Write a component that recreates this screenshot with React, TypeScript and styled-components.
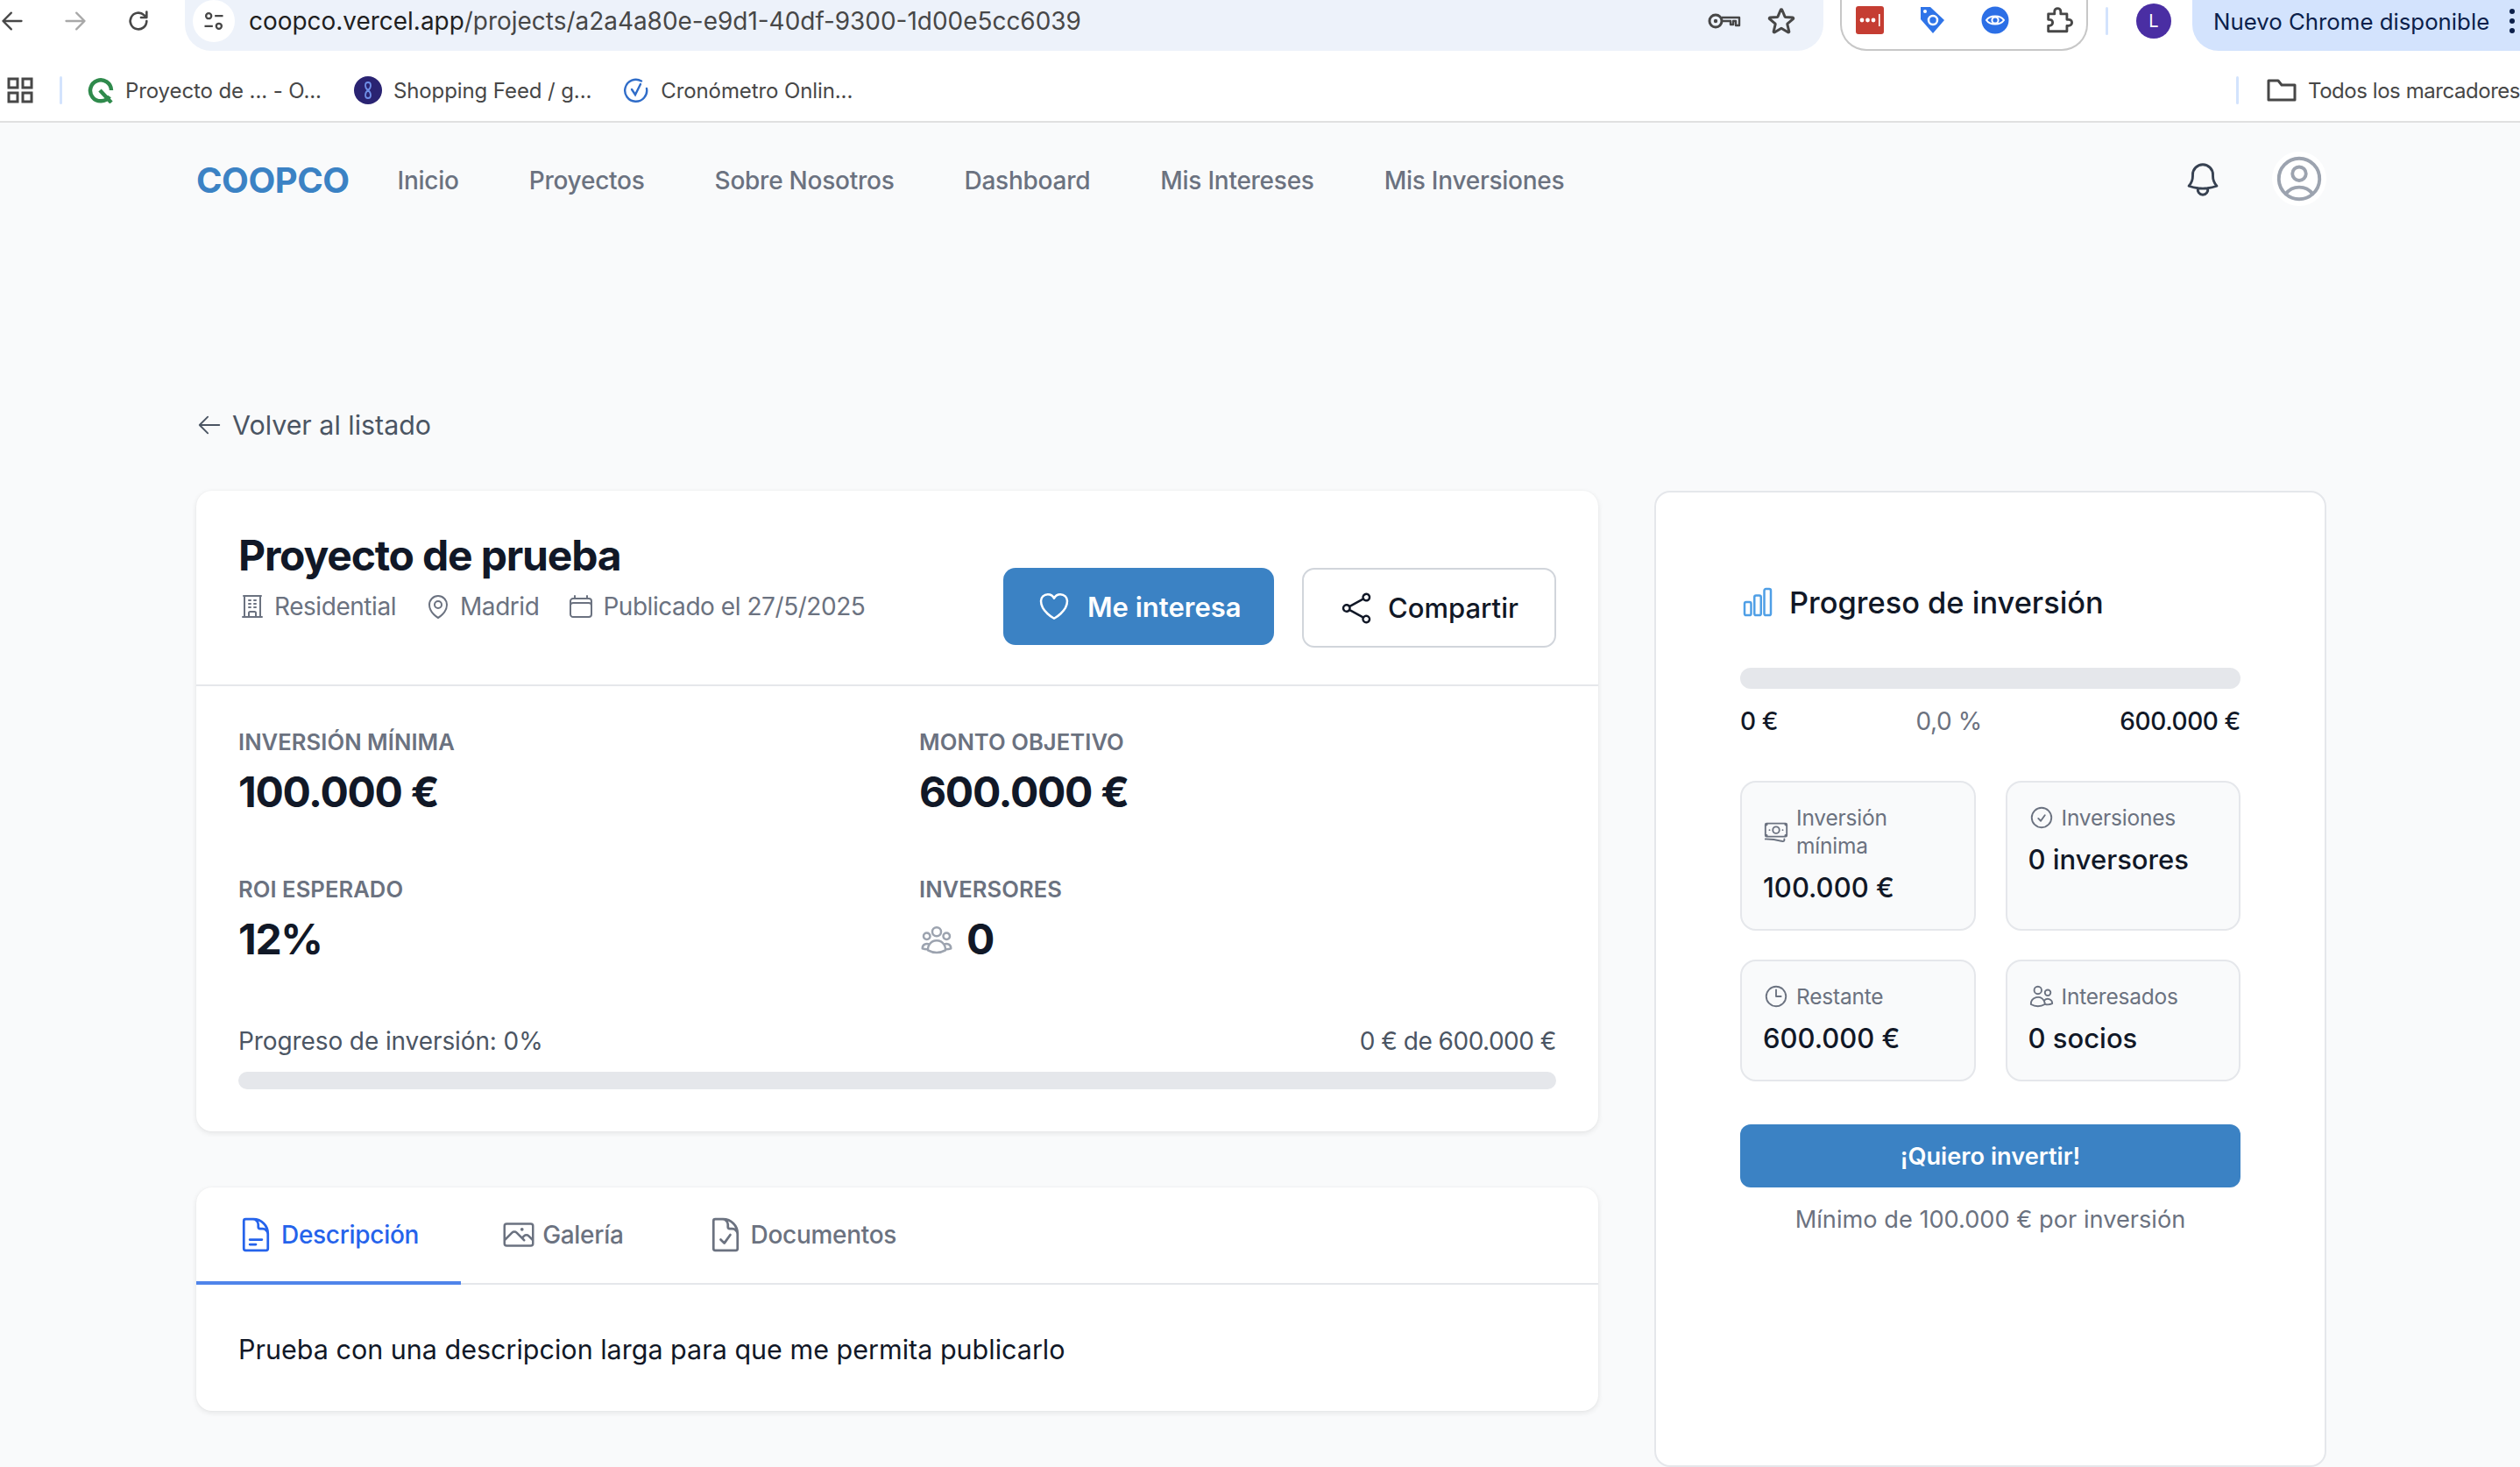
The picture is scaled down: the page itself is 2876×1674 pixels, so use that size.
import React from 'react';
import styled, { createGlobalStyle } from 'styled-components';
import {
  HiOutlineArrowLeft,
  HiOutlineBanknotes,
  HiOutlineBell,
  HiOutlineBuildingOffice,
  HiOutlineCalendar,
  HiOutlineChartBar,
  HiOutlineCheckCircle,
  HiOutlineClock,
  HiOutlineDocumentCheck,
  HiOutlineDocumentText,
  HiOutlineHeart,
  HiOutlineMapPin,
  HiOutlinePhoto,
  HiOutlineShare,
  HiOutlineStar,
  HiOutlineUserCircle,
  HiOutlineUserGroup,
  HiOutlineUsers,
} from 'react-icons/hi2';

const GlobalStyle = createGlobalStyle`
  html, body {
    margin: 0;
    padding: 0;
    width: 2876px;
    height: 1674px;
    overflow: hidden;
    background: #f9fafb;
    font-family: Inter, "Liberation Sans", sans-serif;
  }
  * { box-sizing: border-box; }
`;

const Toolbar = styled.div`
  display: flex;
  align-items: center;
  height: 58px;
  padding-bottom: 10px;
  background: #fff;
  overflow: hidden;
`;

const ToolIcon = styled.svg<{ $left: number; $muted?: boolean }>`
  flex: none;
  margin-left: ${(p) => p.$left}px;
  color: ${(p) => (p.$muted ? '#a8a8a8' : '#474747')};
`;

const Omnibox = styled.div`
  flex: none;
  align-self: flex-start;
  display: flex;
  align-items: center;
  width: 1870px;
  height: 58px;
  margin-left: 39px;
  padding: 0 30px 10px 9px;
  background: #edf2fa;
  border-radius: 0 0 30px 30px;
`;

const SiteInfo = styled.div`
  flex: none;
  display: flex;
  align-items: center;
  justify-content: center;
  width: 48px;
  height: 48px;
  background: #fff;
  border-radius: 50%;
`;

const Url = styled.div`
  flex: 1;
  margin-left: 16px;
  font-size: 27.95px;
  color: #1f1f1f;
  white-space: nowrap;
  span {
    color: #474747;
  }
`;

const StarIcon = styled(HiOutlineStar)`
  flex: none;
  margin-left: 28px;
  color: #474747;
`;

const ExtensionPill = styled.div`
  flex: none;
  align-self: flex-start;
  display: flex;
  align-items: center;
  justify-content: space-between;
  width: 283px;
  height: 58px;
  margin-left: 19px;
  padding: 0 15px 10px 16px;
  background: #fff;
  border: 2px solid #c7c7c7;
  border-top: 0;
  border-radius: 0 0 30px 30px;
`;

const BarSeparator = styled.div<{ $left?: number }>`
  flex: none;
  width: 3px;
  height: 32px;
  margin-left: ${(p) => p.$left ?? 0}px;
  background: #d3e3fd;
  border-radius: 2px;
`;

const ProfileAvatar = styled.div`
  flex: none;
  display: flex;
  align-items: center;
  justify-content: center;
  width: 40px;
  height: 40px;
  margin-left: 32px;
  font-size: 20px;
  color: #fff;
  background: #4a2ea3;
  border-radius: 50%;
`;

const UpdatePill = styled.div`
  flex: none;
  align-self: flex-start;
  display: flex;
  align-items: center;
  width: 374px;
  height: 58px;
  margin-left: 24px;
  padding: 0 0 10px 24px;
  font-size: 25.8px;
  color: #0b1f4b;
  white-space: nowrap;
  background: #d3e3fd;
  border-radius: 0 0 0 30px;
`;

const UpdateDots = styled.svg`
  flex: none;
  margin-left: 22px;
`;

const Bookmarks = styled.div`
  display: flex;
  align-items: center;
  height: 82px;
  padding-top: 10px;
  background: #fff;
  border-bottom: 2px solid #e0e0e0;
  overflow: hidden;
`;

const Bookmark = styled.div<{ $left: number }>`
  flex: none;
  display: flex;
  align-items: center;
  gap: 13px;
  margin-left: ${(p) => p.$left}px;
  font-size: 24px;
  letter-spacing: -0.1px;
  color: #474747;
  white-space: nowrap;
`;

const AllBookmarksLabel = styled.span`
  width: 242px;
  letter-spacing: -0.45px;
`;

const Spacer = styled.div`
  flex: 1;
`;

const TopNav = styled.nav`
  display: flex;
  align-items: center;
  height: 130px;
  padding: 0 221px 0 224px;
`;

const Logo = styled.div`
  font-size: 40px;
  font-weight: 700;
  color: #3b82c4;
  letter-spacing: -0.5px;
  margin-right: 55px;
`;

const NavLinks = styled.div`
  display: flex;
  gap: 80px;
  padding-top: 2px;
`;

const NavLink = styled.a`
  font-size: 28px;
  font-weight: 500;
  letter-spacing: -0.25px;
  color: #6b7280;
`;

const NavActions = styled.div`
  display: flex;
  align-items: center;
  gap: 56px;
  margin-left: auto;
`;

const UserHalo = styled.div`
  display: flex;
  align-items: center;
  justify-content: center;
  width: 62px;
  height: 62px;
  margin-top: -2px;
  background: #fff;
  border-radius: 50%;
  color: #9ca3af;
`;

const Main = styled.main`
  padding: 0 221px 0 224px;
`;

const BackLink = styled.a`
  display: flex;
  align-items: center;
  gap: 11px;
  height: 40px;
  margin-top: 195px;
  font-size: 30.4px;
  color: #4b5563;
`;

const Columns = styled.div`
  display: grid;
  grid-template-columns: 1600px 767px;
  gap: 64px;
  margin-top: 55px;
  align-items: start;
`;

const LeftColumn = styled.div`
  display: flex;
  flex-direction: column;
  gap: 64px;
`;

const Card = styled.section`
  background: #fff;
  border-radius: 18px;
  box-shadow: 0 2px 6px rgba(0, 0, 0, 0.09), 0 0 2px rgba(0, 0, 0, 0.04);
  overflow: hidden;
`;

const ProjectHeader = styled.header`
  display: flex;
  justify-content: space-between;
  align-items: flex-end;
  min-height: 223px;
  padding: 44px 48px 42px;
  border-bottom: 2px solid #e5e7eb;
`;

const TitleBlock = styled.div`
  align-self: flex-start;
`;

const Title = styled.h1`
  margin: 0;
  font-size: 48px;
  line-height: 60px;
  font-weight: 700;
  letter-spacing: -1.2px;
  color: #111827;
`;

const MetaRow = styled.div`
  display: flex;
  gap: 32px;
  margin-top: 8px;
  line-height: 40px;
`;

const MetaItem = styled.span`
  display: flex;
  align-items: center;
  gap: 9px;
  font-size: 28px;
  letter-spacing: -0.45px;
  color: #6b7280;
`;

const Actions = styled.div`
  display: flex;
  gap: 32px;
`;

const PrimaryButton = styled.button`
  display: flex;
  align-items: center;
  gap: 18px;
  width: 309px;
  height: 88px;
  margin-bottom: 3px;
  padding: 0 0 0 38px;
  font: 600 31px Inter, sans-serif;
  color: #fff;
  background: #3b82c4;
  border: 0;
  border-radius: 14px;
`;

const OutlineButton = styled.button`
  display: flex;
  align-items: center;
  gap: 16px;
  width: 290px;
  height: 91px;
  padding: 0 0 0 40px;
  font: 500 31px Inter, sans-serif;
  color: #111827;
  background: #fff;
  border: 2px solid #d1d5db;
  border-radius: 14px;
`;

const Stats = styled.div`
  padding: 48px 48px 48px;
`;

const StatGrid = styled.div`
  display: grid;
  grid-template-columns: 1fr 1fr;
  column-gap: 50px;
  row-gap: 65px;
`;

const StatLabel = styled.div`
  font-size: 25.6px;
  line-height: 32px;
  font-weight: 600;
  letter-spacing: 0.05px;
  color: #6b7280;
`;

const StatValue = styled.div`
  display: flex;
  align-items: center;
  gap: 14px;
  margin-top: 11px;
  font-size: 48px;
  line-height: 60px;
  font-weight: 700;
  letter-spacing: -1.3px;
  color: #111827;
  svg {
    color: #9ca3af;
  }
`;

const ProgressHead = styled.div`
  display: flex;
  justify-content: space-between;
  margin-top: 68px;
  font-size: 28px;
  line-height: 36px;
  letter-spacing: -0.1px;
  color: #4b5563;
`;

const ProgressAmount = styled.span`
  letter-spacing: -0.5px;
`;

const Track = styled.div<{ $height: number }>`
  height: ${(p) => p.$height}px;
  background: #e5e7eb;
  border-radius: ${(p) => p.$height / 2}px;
`;

const ProgressTrack = styled(Track)`
  margin-top: 17px;
`;

const TabBar = styled.div`
  display: flex;
  border-bottom: 2px solid #e5e7eb;
`;

const Tab = styled.div<{ $active?: boolean }>`
  display: flex;
  align-items: center;
  gap: 7px;
  height: 111px;
  margin-bottom: -2px;
  padding: 0 48px 0 46px;
  font-size: 28px;
  font-weight: 500;
  letter-spacing: -0.3px;
  color: ${(p) => (p.$active ? '#2563eb' : '#6b7280')};
  border-bottom: 4px solid ${(p) => (p.$active ? '#4f84ea' : 'transparent')};
`;

const Description = styled.p`
  margin: 0;
  padding: 52px 48px 48px;
  font-size: 30.5px;
  line-height: 44px;
  color: #111827;
`;

const SideCard = styled.aside`
  height: 1114px;
  padding: 98px 96px 0;
  background: #fff;
  border: 2px solid #e5e7eb;
  border-radius: 18px;
`;

const SideTitle = styled.h2`
  display: flex;
  align-items: center;
  gap: 16px;
  margin: 0;
  height: 54px;
  font-size: 34.4px;
  font-weight: 500;
  color: #111827;
  svg {
    color: #4f9fe6;
  }
`;

const SideTrack = styled(Track)`
  margin-top: 48px;
`;

const SideScale = styled.div`
  display: flex;
  justify-content: space-between;
  margin-top: 19px;
  font-size: 28px;
  line-height: 36px;
  font-weight: 500;
  letter-spacing: -0.4px;
  color: #111827;
  span:nth-child(2) {
    color: #6b7280;
    font-weight: 400;
  }
`;

const InfoGrid = styled.div`
  display: grid;
  grid-template-columns: 1fr 1fr;
  grid-template-rows: 171px 139px;
  gap: 33px 34px;
  margin-top: 50px;
`;

const InfoBox = styled.div`
  padding: 24px 24px;
  background: #f9fafb;
  border: 2px solid #e5e7eb;
  border-radius: 18px;
`;

const InfoLabel = styled.div`
  display: flex;
  align-items: center;
  gap: 8px;
  font-size: 24.5px;
  line-height: 32px;
  letter-spacing: -0.2px;
  color: #6b7280;
  svg {
    flex: none;
  }
`;

const InfoValue = styled.div`
  margin-top: 14px;
  font-size: 31px;
  line-height: 36px;
  font-weight: 500;
  color: #111827;
`;

const InvestButton = styled.button`
  display: block;
  width: 100%;
  height: 72px;
  margin-top: 49px;
  font: 600 27.2px Inter, sans-serif;
  color: #fff;
  background: #3b82c4;
  border: 0;
  border-radius: 12px;
`;

const Hint = styled.div`
  margin-top: 17px;
  text-align: center;
  font-size: 27.2px;
  line-height: 40px;
  color: #6b7280;
`;

const strokeProps = { fill: 'none', stroke: 'currentColor', strokeLinecap: 'round', strokeLinejoin: 'round' } as const;

const App = () => (
  <>
    <GlobalStyle />
    <Toolbar>
      <ToolIcon $left={0} width="28" height="28" viewBox="0 0 24 24" {...strokeProps} strokeWidth={2}>
        <path d="M21 12H3M11 4l-8 8 8 8" />
      </ToolIcon>
      <ToolIcon $left={44} $muted width="28" height="28" viewBox="0 0 24 24" {...strokeProps} strokeWidth={2}>
        <path d="M3 12h18M13 4l8 8-8 8" />
      </ToolIcon>
      <ToolIcon $left={44} width="28" height="28" viewBox="0 0 24 24" {...strokeProps} strokeWidth={2.2}>
        <path d="M20 12a8 8 0 1 1-2.6-5.9L20 8.5M20 3v5.5h-5.5" />
      </ToolIcon>
      <Omnibox>
        <SiteInfo>
          <svg width="28" height="28" viewBox="0 0 24 24" fill="none" stroke="#474747" strokeWidth={2}>
            <circle cx="7" cy="7" r="2.6" />
            <path d="M13 7h8M3 17h8" />
            <circle cx="17" cy="17" r="2.6" />
          </svg>
        </SiteInfo>
        <Url>
          coopco.vercel.app<span>/projects/a2a4a80e-e9d1-40df-9300-1d00e5cc6039</span>
        </Url>
        <svg width="38" height="20" viewBox="0 0 38 20" fill="none" stroke="#474747" strokeWidth={3}>
          <circle cx="9" cy="10" r="7" />
          <circle cx="9" cy="10" r="2.2" fill="#474747" stroke="none" />
          <path d="M16 6h20v9h-4v-5h-3v4h-3v-4H16" strokeWidth={2.4} strokeLinejoin="round" />
        </svg>
        <StarIcon size={36} strokeWidth={2} />
      </Omnibox>
      <ExtensionPill>
        <svg width="32" height="32" viewBox="0 0 32 32">
          <rect width="32" height="32" rx="3" fill="#c53d32" />
          <circle cx="7" cy="16" r="2.4" fill="#fff" />
          <circle cx="13.5" cy="16" r="2.4" fill="#fff" />
          <circle cx="20" cy="16" r="2.4" fill="#fff" />
          <rect x="26" y="9" width="1.6" height="14" fill="#fff" />
        </svg>
        <svg width="32" height="32" viewBox="0 0 32 32">
          <path d="M3 1h11l16 15-13 15L3 15z" fill="#2f74e8" />
          <circle cx="8" cy="6" r="2" fill="#fff" />
          <circle cx="17" cy="16" r="5" fill="none" stroke="#fff" strokeWidth={2.5} />
        </svg>
        <svg width="32" height="32" viewBox="0 0 32 32">
          <circle cx="16" cy="16" r="15.5" fill="#2c6fe6" />
          <path d="M6 16c4-6 16-6 20 0-4 6-16 6-20 0z" fill="none" stroke="#fff" strokeWidth={2} />
          <circle cx="16" cy="16" r="3.6" fill="none" stroke="#fff" strokeWidth={2} />
        </svg>
        <svg width="34" height="34" viewBox="0 0 24 24" fill="none" stroke="#474747" strokeWidth={2} strokeLinejoin="round">
          <path d="M4 7h5V5a2.5 2.5 0 0 1 5 0v2h5v4.5h1.5a2.5 2.5 0 0 1 0 5H19V21H4v-4.5h1a2.5 2.5 0 0 0 0-5H4z" />
        </svg>
      </ExtensionPill>
      <BarSeparator $left={20} />
      <ProfileAvatar>L</ProfileAvatar>
      <UpdatePill>
        Nuevo Chrome disponible
        <UpdateDots width="8" height="32" viewBox="0 0 8 32" fill="#0b1f4b">
          <circle cx="4" cy="5" r="3" />
          <circle cx="4" cy="16" r="3" />
          <circle cx="4" cy="27" r="3" />
        </UpdateDots>
      </UpdatePill>
    </Toolbar>
    <Bookmarks>
      <ToolIcon $left={8} width="30" height="30" viewBox="0 0 30 30" fill="none" stroke="#474747" strokeWidth={3}>
        <rect x="2" y="2" width="10" height="10" />
        <rect x="18" y="2" width="10" height="10" />
        <rect x="2" y="18" width="10" height="10" />
        <rect x="18" y="18" width="10" height="10" />
      </ToolIcon>
      <BarSeparator $left={30} />
      <Bookmark $left={29}>
        <svg width="30" height="30" viewBox="0 0 30 30" fill="none" stroke="#2f8a4c" strokeWidth={4.5}>
          <path d="M25 22A12 12 0 1 1 27 15" />
          <path d="M14 15l13 14" />
        </svg>
        Proyecto de ... - O...
      </Bookmark>
      <Bookmark $left={37}>
        <svg width="32" height="32" viewBox="0 0 32 32" fill="none">
          <circle cx="16" cy="16" r="16" fill="#2a2372" />
          <path d="M16 16c-4-3-4-9 0-9s4 6 0 9c4 3 4 9 0 9s-4-6 0-9z" stroke="#6f8fe8" strokeWidth={1.8} />
        </svg>
        Shopping Feed / g...
      </Bookmark>
      <Bookmark $left={36}>
        <svg width="30" height="30" viewBox="0 0 30 30" fill="none" stroke="#2f6cc8" strokeWidth={2.4} strokeLinecap="round">
          <path d="M21 4.5A12.5 12.5 0 1 0 27 13" />
          <path d="M10 14l4 6 6-12" />
        </svg>
        Cronómetro Onlin...
      </Bookmark>
      <Spacer />
      <BarSeparator />
      <Bookmark $left={32}>
        <svg width="34" height="28" viewBox="0 0 34 28" fill="none" stroke="#474747" strokeWidth={3} strokeLinejoin="round">
          <path d="M2 3h11l4 5h15v17H2z" />
        </svg>
        <AllBookmarksLabel>Todos los marcadores</AllBookmarksLabel>
      </Bookmark>
    </Bookmarks>
    <TopNav>
      <Logo>COOPCO</Logo>
      <NavLinks>
        <NavLink>Inicio</NavLink>
        <NavLink>Proyectos</NavLink>
        <NavLink>Sobre Nosotros</NavLink>
        <NavLink>Dashboard</NavLink>
        <NavLink>Mis Intereses</NavLink>
        <NavLink>Mis Inversiones</NavLink>
      </NavLinks>
      <NavActions>
        <HiOutlineBell size={46} color="#374151" />
        <UserHalo>
          <HiOutlineUserCircle size={62} />
        </UserHalo>
      </NavActions>
    </TopNav>
    <Main>
      <BackLink>
        <HiOutlineArrowLeft size={30} />
        Volver al listado
      </BackLink>
      <Columns>
        <LeftColumn>
          <Card>
            <ProjectHeader>
              <TitleBlock>
                <Title>Proyecto de prueba</Title>
                <MetaRow>
                  <MetaItem>
                    <HiOutlineBuildingOffice size={32} />
                    Residential
                  </MetaItem>
                  <MetaItem>
                    <HiOutlineMapPin size={32} />
                    Madrid
                  </MetaItem>
                  <MetaItem>
                    <HiOutlineCalendar size={32} />
                    Publicado el 27/5/2025
                  </MetaItem>
                </MetaRow>
              </TitleBlock>
              <Actions>
                <PrimaryButton>
                  <HiOutlineHeart size={40} />
                  Me interesa
                </PrimaryButton>
                <OutlineButton>
                  <HiOutlineShare size={40} />
                  Compartir
                </OutlineButton>
              </Actions>
            </ProjectHeader>
            <Stats>
              <StatGrid>
                <div>
                  <StatLabel>INVERSIÓN MÍNIMA</StatLabel>
                  <StatValue>100.000 €</StatValue>
                </div>
                <div>
                  <StatLabel>MONTO OBJETIVO</StatLabel>
                  <StatValue>600.000 €</StatValue>
                </div>
                <div>
                  <StatLabel>ROI ESPERADO</StatLabel>
                  <StatValue>12%</StatValue>
                </div>
                <div>
                  <StatLabel>INVERSORES</StatLabel>
                  <StatValue>
                    <HiOutlineUserGroup size={40} />0
                  </StatValue>
                </div>
              </StatGrid>
              <ProgressHead>
                <span>Progreso de inversión: 0%</span>
                <ProgressAmount>0 € de 600.000 €</ProgressAmount>
              </ProgressHead>
              <ProgressTrack $height={20} />
            </Stats>
          </Card>
          <Card>
            <TabBar>
              <Tab $active>
                <HiOutlineDocumentText size={44} />
                Descripción
              </Tab>
              <Tab>
                <HiOutlinePhoto size={40} />
                Galería
              </Tab>
              <Tab>
                <HiOutlineDocumentCheck size={44} />
                Documentos
              </Tab>
            </TabBar>
            <Description>Prueba con una descripcion larga para que me permita publicarlo</Description>
          </Card>
        </LeftColumn>
        <SideCard>
          <SideTitle>
            <HiOutlineChartBar size={40} />
            Progreso de inversión
          </SideTitle>
          <SideTrack $height={24} />
          <SideScale>
            <span>0 €</span>
            <span>0,0 %</span>
            <span>600.000 €</span>
          </SideScale>
          <InfoGrid>
            <InfoBox>
              <InfoLabel>
                <HiOutlineBanknotes size={30} color="#6b7280" />
                <span>
                  Inversión
                  <br />
                  mínima
                </span>
              </InfoLabel>
              <InfoValue>100.000 €</InfoValue>
            </InfoBox>
            <InfoBox>
              <InfoLabel>
                <HiOutlineCheckCircle size={30} color="#6b7280" />
                Inversiones
              </InfoLabel>
              <InfoValue>0 inversores</InfoValue>
            </InfoBox>
            <InfoBox>
              <InfoLabel>
                <HiOutlineClock size={30} color="#6b7280" />
                Restante
              </InfoLabel>
              <InfoValue>600.000 €</InfoValue>
            </InfoBox>
            <InfoBox>
              <InfoLabel>
                <HiOutlineUsers size={30} color="#6b7280" />
                Interesados
              </InfoLabel>
              <InfoValue>0 socios</InfoValue>
            </InfoBox>
          </InfoGrid>
          <InvestButton>¡Quiero invertir!</InvestButton>
          <Hint>Mínimo de 100.000 € por inversión</Hint>
        </SideCard>
      </Columns>
    </Main>
  </>
);

export default App;
